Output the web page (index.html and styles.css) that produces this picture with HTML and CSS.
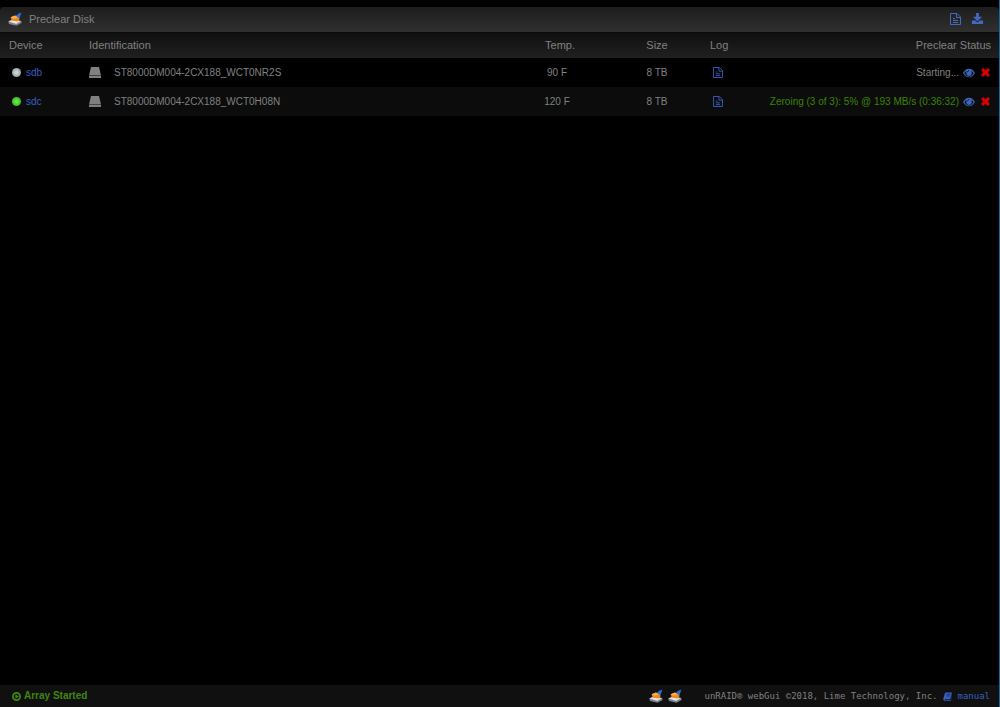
FILE: index.html
```html
<!DOCTYPE html>
<html lang="en">
<head>
<meta charset="utf-8">
<title>Preclear Disk</title>
<link rel="stylesheet" href="styles.css">
</head>
<body>
<svg class="sprite" aria-hidden="true">
  <symbol id="brush" viewBox="0 0 14 14">
    <path d="M.3 9.4 3.6 8l9.6 1 .4 2-5.1 2.8L1 12z" fill="#7d8086"/>
    <path d="M.3 9.4 3.6 8l9.6 1-4.8 3z" fill="#d6d6dc"/>
    <path d="M3.5 9.9l4.2.9 2.5-1.2-3.5-.8z" fill="#f3f3f6"/>
    <path d="M7.4 4.6Q10 1 13.4.6L11.4 6.4z" fill="#2a6fd2"/>
    <path d="M2.6 5.2 7 3.6l4.4 2.6-.2 2.6-2.9.8L3.6 8.2z" fill="#e88a1c"/>
    <path d="M2.6 5.2 7 3.6l2.8 1.9-4.2 1.3z" fill="#ffb048"/>
  </symbol>
  <symbol id="file" viewBox="0 0 11 12">
    <path d="M.5.5H7L10.5 4v7.5H.5zM6.5.5v4h4M3 5.5h2M3 7.5h5M3 9.5h5" fill="none" stroke="currentColor"/>
  </symbol>
  <symbol id="download" viewBox="0 0 14 14">
    <path d="M5.5 1h3v4H12L7 10 2 5h3.5zM1 9.2h3.6L7 11.4l2.4-2.2H13v3.6H1z" fill="currentColor"/>
  </symbol>
  <symbol id="disk" viewBox="0 0 12 12">
    <path d="M2 0h8l2 8.4H0zM0 9h12v2H0z" fill="currentColor"/>
  </symbol>
  <symbol id="eye" viewBox="0 0 12 10">
    <path d="M0 5C3-.8 9-.8 12 5 9 10.6 3 10.6 0 5z" fill="currentColor"/>
    <path d="M1.3 5.2Q2.2 3.6 3.4 3 2.6 7.4 6 8 9.4 7.4 8.6 3q1.2.6 2.1 2.2Q8.5 8.8 6 8.8T1.3 5.2z" fill="#0b1224"/>
    <path d="M4.4 4.4Q4.6 2.5 6.3 2.4" fill="none" stroke="#0b1224" stroke-width=".8"/>
  </symbol>
  <symbol id="cross" viewBox="0 0 10 10">
    <path d="M2.3 0 5 2.5 7.7 0 10 2.3 7.5 5 10 7.7 7.7 10 5 7.5 2.3 10 0 7.7 2.5 5 0 2.3z" fill="currentColor"/>
  </symbol>
  <symbol id="play" viewBox="0 0 10 10">
    <circle cx="5" cy="5" r="4" fill="none" stroke="currentColor" stroke-width="2"/>
    <path d="M3.7 2.5 7.7 5 3.7 7.5z" fill="currentColor"/>
  </symbol>
  <symbol id="book" viewBox="0 0 10 10">
    <path d="M3 .5h7L8 8H2.2q-.8.6 0 .9H8.6L10 3v.8L8.8 9.8H1.5Q0 9.3.3 7.6L2.2 1.2Q2.4.5 3 .5z" fill="currentColor"/>
    <path d="M4 2.6h4M3.5 4.4h4" stroke="#16213c" stroke-width=".8"/>
  </symbol>
</svg>

<div class="page">
  <header class="title">
    <svg class="brush"><use href="#brush"/></svg>
    <h1 class="title-text">Preclear Disk</h1>
    <a class="tool" href="#log" aria-label="Preclear log"><svg class="tool-file"><use href="#file"/></svg></a>
    <a class="tool" href="#download" aria-label="Download"><svg class="tool-download"><use href="#download"/></svg></a>
  </header>

  <main class="content">
    <table class="disks">
      <thead>
        <tr>
          <th class="device">Device</th>
          <th class="ident">Identification</th>
          <th class="temp">Temp.</th>
          <th class="size">Size</th>
          <th class="log">Log</th>
          <th class="status">Preclear Status</th>
        </tr>
      </thead>
      <tbody>
        <tr>
          <td><span class="device-cell"><span class="orb orb-idle"></span><a href="#sdb">sdb</a></span></td>
          <td><span class="ident-cell"><svg class="disk"><use href="#disk"/></svg>ST8000DM004-2CX188_WCT0NR2S</span></td>
          <td class="center">90 F</td>
          <td class="center">8 TB</td>
          <td><a class="log-link" href="#log-sdb" aria-label="Disk log sdb"><svg class="log-icon"><use href="#file"/></svg></a></td>
          <td><span class="status-cell"><span>Starting...</span><button class="action" aria-label="Preview"><svg class="eye"><use href="#eye"/></svg></button><button class="action stop" aria-label="Stop"><svg class="cross"><use href="#cross"/></svg></button></span></td>
        </tr>
        <tr>
          <td><span class="device-cell"><span class="orb orb-on"></span><a href="#sdc">sdc</a></span></td>
          <td><span class="ident-cell"><svg class="disk"><use href="#disk"/></svg>ST8000DM004-2CX188_WCT0H08N</span></td>
          <td class="center">120 F</td>
          <td class="center">8 TB</td>
          <td><a class="log-link" href="#log-sdc" aria-label="Disk log sdc"><svg class="log-icon"><use href="#file"/></svg></a></td>
          <td><span class="status-cell"><span class="running">Zeroing (3 of 3): 5% @ 193 MB/s (0:36:32)</span><button class="action" aria-label="Preview"><svg class="eye"><use href="#eye"/></svg></button><button class="action stop" aria-label="Stop"><svg class="cross"><use href="#cross"/></svg></button></span></td>
        </tr>
      </tbody>
    </table>
  </main>

  <footer class="footer">
    <span class="array"><svg class="play"><use href="#play"/></svg>Array Started</span>
    <span class="brushes"><svg class="brush"><use href="#brush"/></svg><svg class="brush"><use href="#brush"/></svg></span>
    <span class="legal"><span>unRAID® webGui ©2018, Lime Technology, Inc.</span><a class="manual" href="#manual"><svg class="book"><use href="#book"/></svg>manual</a></span>
  </footer>
</div>
</body>
</html>
```
FILE: styles.css
```css
* {
  box-sizing: border-box;
}

body {
  margin: 0;
  background: #000;
  color: #808080;
  font: 10px/16px "Liberation Sans", Arial, sans-serif;
}

a {
  color: #3a5fc0;
  text-decoration: none;
}

svg {
  display: block;
  flex: none;
}

.sprite {
  display: none;
}

.page {
  display: flex;
  flex-direction: column;
  min-height: 100vh;
  padding-top: 7px;
  border-right: 1px solid #1a659c;
}

.title {
  display: flex;
  align-items: center;
  height: 26px;
  padding: 0 15px 2px 8px;
  border-bottom: 1px solid #0a0a0a;
  border-radius: 4px 4px 0 0;
  background: linear-gradient(#1d1d1d, #303030);
}

.title-text {
  flex: 1;
  margin: 0 0 0 7px;
  font-size: 11px;
  font-weight: normal;
}

.brush {
  width: 14px;
  height: 14px;
}

.tool {
  margin-left: 10px;
  color: #4169c4;
}

.tool-file {
  width: 11px;
  height: 12px;
}

.tool-download {
  width: 13px;
  height: 13px;
}

.content {
  flex: 1;
}

.disks {
  width: 100%;
  table-layout: fixed;
  border-collapse: collapse;
}

.disks th {
  height: 25px;
  padding: 0 0 2px;
  font-size: 11px;
  font-weight: normal;
  text-align: left;
}

.disks thead {
  background: linear-gradient(#101010, #202020);
}

.disks td {
  height: 29px;
  padding: 0;
}

.disks tbody tr:nth-child(even) {
  background: #0c0c0c;
}

.disks .device {
  width: 89px;
  padding-left: 9px;
}

.disks .temp {
  width: 100px;
  padding-left: 6px;
  text-align: center;
}

.disks .size {
  width: 100px;
  text-align: center;
}

.disks .log {
  width: 40px;
  padding-left: 3px;
}

.disks .status {
  width: 252px;
  padding-right: 8px;
  text-align: right;
}

.center {
  text-align: center;
}

.device-cell {
  display: flex;
  align-items: center;
  gap: 5px;
  padding-left: 12px;
}

.orb {
  width: 9px;
  height: 9px;
  border-radius: 50%;
}

.orb-idle {
  background: radial-gradient(#c8d3d7 20%, #8b989c 80%);
}

.orb-on {
  background: radial-gradient(#62e546 20%, #2eb01c 80%);
}

.ident-cell {
  display: flex;
  align-items: center;
  gap: 13px;
}

.disk {
  width: 12px;
  height: 12px;
}

.log-link {
  display: block;
  padding-left: 6px;
}

.log-icon {
  width: 10px;
  height: 11px;
}

.status-cell {
  display: flex;
  align-items: center;
  justify-content: flex-end;
  padding-right: 9px;
  white-space: nowrap;
}

.running {
  color: #3a8400;
}

.action {
  margin: 0 0 0 4px;
  padding: 0;
  border: 0;
  background: none;
  color: #3f68bd;
}

.stop {
  margin-left: 6px;
  color: #d60000;
}

.eye {
  width: 12px;
  height: 10px;
}

.cross {
  width: 9px;
  height: 9px;
}

.footer {
  display: flex;
  align-items: center;
  height: 22px;
  padding: 0 9px 0 12px;
  background: #101010;
}

.array {
  display: flex;
  flex: 1;
  align-items: center;
  gap: 3px;
  color: #40850c;
  font-weight: bold;
}

.play {
  width: 9px;
  height: 9px;
}

.brushes {
  display: flex;
  gap: 5px;
  margin-right: 22px;
}

.legal {
  display: flex;
  align-items: center;
  gap: 6px;
  font: 9px/16px "DejaVu Sans Mono", monospace;
}

.manual {
  display: flex;
  align-items: center;
  gap: 5px;
}

.book {
  width: 9px;
  height: 9px;
}
```
